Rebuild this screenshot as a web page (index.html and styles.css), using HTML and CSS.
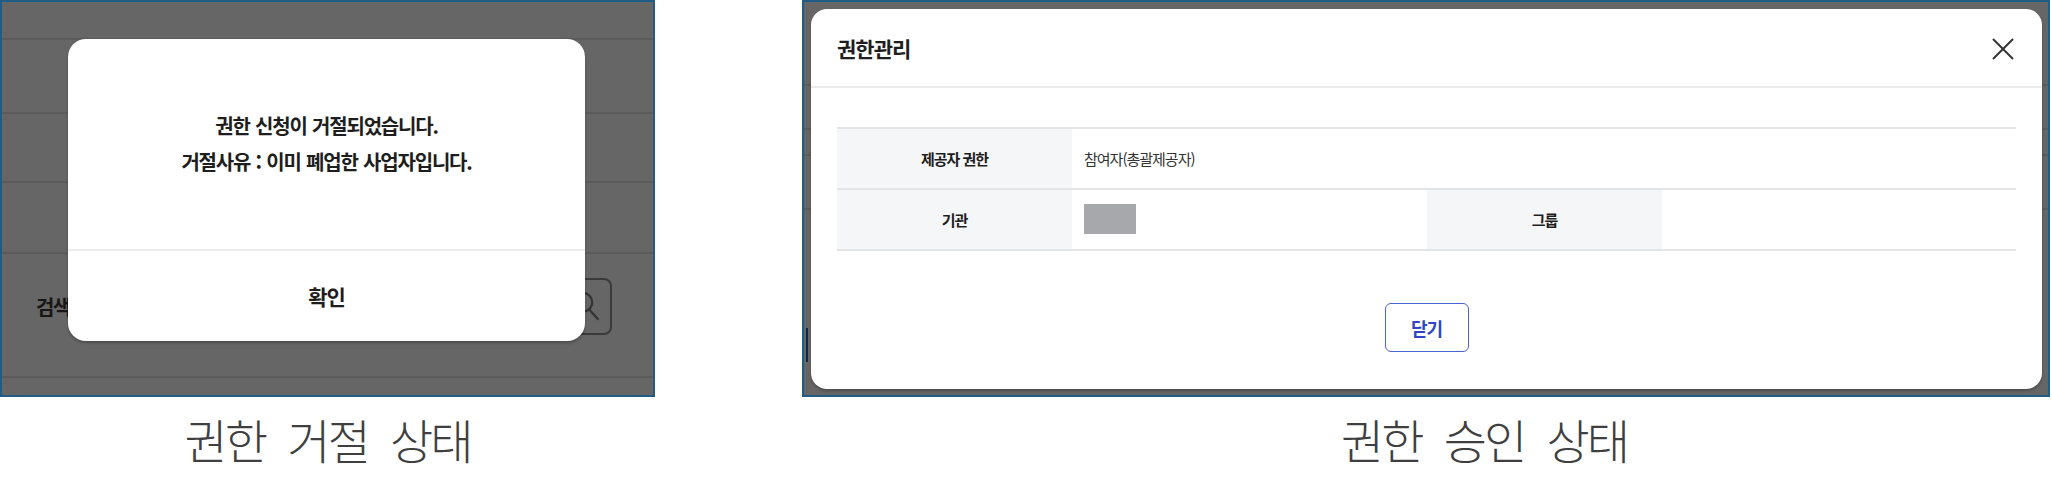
FILE: index.html
```html
<!DOCTYPE html>
<html lang="ko">
<head>
<meta charset="utf-8">
<title>권한 상태</title>
<link rel="stylesheet" href="styles.css">
</head>
<body>
<div class="stage">
  <div class="shots">
    <section class="shot shot-reject">
      <div class="page">
        <div class="pg-row r1"></div>
        <div class="pg-row r2"></div>
        <div class="pg-row r3"></div>
        <div class="pg-row r4"></div>
        <div class="pg-row r5">
          <span class="search-label">검색</span>
          <span class="search-btn">
            <svg viewBox="0 0 60 57" width="60" height="57">
              <circle cx="31" cy="24" r="10" fill="none" stroke="#333" stroke-width="2.4"/>
              <line x1="38" y1="32" x2="47" y2="42" stroke="#333" stroke-width="2.4" stroke-linecap="round"/>
            </svg>
          </span>
        </div>
        <div class="pg-row r6"></div>
      </div>
      <div class="alert">
        <div class="alert-body">
          <p class="alert-line">권한 신청이 거절되었습니다.</p>
          <p class="alert-line">거절사유 : 이미 폐업한 사업자입니다.</p>
        </div>
        <div class="alert-foot">확인</div>
      </div>
    </section>

    <section class="shot shot-approve">
      <div class="page page-right">
        <div class="pg-row q1"></div>
        <div class="pg-row q2"></div>
        <div class="pg-row q3"></div>
        <div class="pg-row q4"></div>
        <div class="pg-row q5"><span class="edge-mark"></span></div>
      </div>
      <div class="modal">
        <div class="modal-head">
          <h2 class="modal-title">권한관리</h2>
          <span class="modal-close">
            <svg viewBox="0 0 24 24" width="24" height="24">
              <line x1="2" y1="2" x2="22" y2="22" stroke="#333" stroke-width="2"/>
              <line x1="22" y1="2" x2="2" y2="22" stroke="#333" stroke-width="2"/>
            </svg>
          </span>
        </div>
        <div class="modal-body">
          <div class="info-table">
            <div class="cell label">제공자 권한</div>
            <div class="cell value span3">참여자(총괄제공자)</div>
            <div class="cell label">기관</div>
            <div class="cell value"><span class="masked"></span></div>
            <div class="cell label">그룹</div>
            <div class="cell value"></div>
          </div>
          <div class="modal-actions">
            <button class="btn-close" type="button">닫기</button>
          </div>
        </div>
      </div>
    </section>
  </div>

  <div class="captions">
    <p class="cap cap-left">권한 거절 상태</p>
    <p class="cap cap-right">권한 승인 상태</p>
  </div>
</div>
</body>
</html>
```

FILE: styles.css
```css
* { box-sizing: border-box; }

html, body {
  margin: 0;
  padding: 0;
  background: #ffffff;
}

body {
  font-family: "Noto Sans CJK KR", "Noto Sans", sans-serif;
  color: #222;
}

.stage {
  width: 2052px;
  height: 488px;
}

.shots {
  display: flex;
  height: 397px;
}

.shot {
  position: relative;
  height: 397px;
  border: 2px solid #1f5d86;
  background: #666666;
  overflow: hidden;
}

.shot-reject { width: 655px; }
.shot-approve { width: 1248px; margin-left: 147px; }

/* dimmed page underneath */
.page {
  display: flex;
  flex-direction: column;
}

.pg-row {
  border-bottom: 2px solid #5b5b5b;
  flex: none;
}

.r1 { height: 38px; }
.r2 { height: 74px; }
.r3 { height: 69px; }
.r4 { height: 71px; }
.r5 {
  height: 124px;
  display: flex;
  align-items: center;
  padding: 0 41px 17px 34px;
}
.r6 { border-bottom: none; }

.search-label {
  font-size: 20px;
  font-weight: 700;
  letter-spacing: -1.5px;
  color: #161616;
}

.search-btn {
  margin-left: auto;
  width: 60px;
  height: 57px;
  border: 2px solid #3a3a3a;
  border-radius: 8px;
  display: flex;
  align-items: center;
  justify-content: center;
}

.search-btn svg { display: block; }

.q1 { height: 84px; }
.q2 { height: 44px; }
.q3 { height: 26px; }
.q4 { height: 54px; }
.q5 { height: 170px; border-bottom: none; position: relative; }

.edge-mark {
  position: absolute;
  left: 2px;
  top: 118px;
  width: 2px;
  height: 34px;
  background: #0d2a44;
}

/* rejection alert */
.alert {
  position: absolute;
  left: 66px;
  top: 37px;
  width: 517px;
  height: 302px;
  background: #ffffff;
  border-radius: 18px;
  box-shadow: 0 2px 3px rgba(0, 0, 0, 0.25);
  display: flex;
  flex-direction: column;
}

.alert-body {
  height: 212px;
  display: flex;
  flex-direction: column;
  align-items: center;
  justify-content: center;
  border-bottom: 2px solid #ececec;
}

.alert-line {
  margin: 0;
  font-size: 20px;
  line-height: 36px;
  font-weight: 700;
  letter-spacing: -1.2px;
  word-spacing: 1px;
  color: #1e1e1e;
}

.alert-foot {
  flex: 1;
  display: flex;
  align-items: center;
  justify-content: center;
  font-size: 21px;
  font-weight: 700;
  letter-spacing: -1px;
  color: #1e1e1e;
}

/* approval modal */
.modal {
  position: absolute;
  left: 7px;
  top: 7px;
  width: 1231px;
  height: 380px;
  background: #ffffff;
  border-radius: 16px;
  box-shadow: 0 2px 3px rgba(0, 0, 0, 0.25);
  display: flex;
  flex-direction: column;
}

.modal-head {
  height: 79px;
  border-bottom: 2px solid #ebebeb;
  display: flex;
  align-items: center;
  padding: 0 27px 0 26px;
}

.modal-title {
  margin: 0;
  font-size: 21px;
  font-weight: 700;
  letter-spacing: -1px;
  color: #1e1e1e;
}

.modal-close {
  margin-left: auto;
  display: flex;
  margin-top: 2px;
}

.modal-close svg { display: block; }

.modal-body {
  padding: 39px 26px 0;
  display: flex;
  flex-direction: column;
}

.info-table {
  display: grid;
  grid-template-columns: 235px 355px 235px 1fr;
  border-top: 2px solid #e3e4e6;
}

.cell {
  height: 61px;
  border-bottom: 2px solid #e3e4e6;
  display: flex;
  align-items: center;
  font-size: 15px;
  letter-spacing: -1px;
}

.cell.label {
  background: #f5f6f8;
  justify-content: center;
  font-weight: 700;
  color: #1e1e1e;
}

.cell.value {
  padding-left: 12px;
  color: #333;
}

.cell.span3 { grid-column: span 3; }

.masked {
  display: block;
  width: 52px;
  height: 30px;
  background: #a7a8ab;
  margin-top: -2px;
}

.modal-actions {
  display: flex;
  justify-content: center;
  padding-top: 52px;
}

.btn-close {
  width: 84px;
  height: 49px;
  border: 1.5px solid #4a62d6;
  border-radius: 6px;
  background: #ffffff;
  font-family: "Noto Sans CJK KR", "Noto Sans", sans-serif;
  font-size: 18px;
  font-weight: 700;
  letter-spacing: -1px;
  color: #2f45c6;
  padding: 0;
}

/* captions */
.captions {
  display: flex;
  margin-top: 12px;
}

.cap {
  margin: 0;
  font-size: 47px;
  line-height: 60px;
  font-weight: 300;
  letter-spacing: -3px;
  word-spacing: 12px;
  color: #3f3f3f;
  text-align: center;
}

.cap-left { width: 655px; }
.cap-right { width: 1248px; margin-left: 147px; padding-left: 116px; }
```
